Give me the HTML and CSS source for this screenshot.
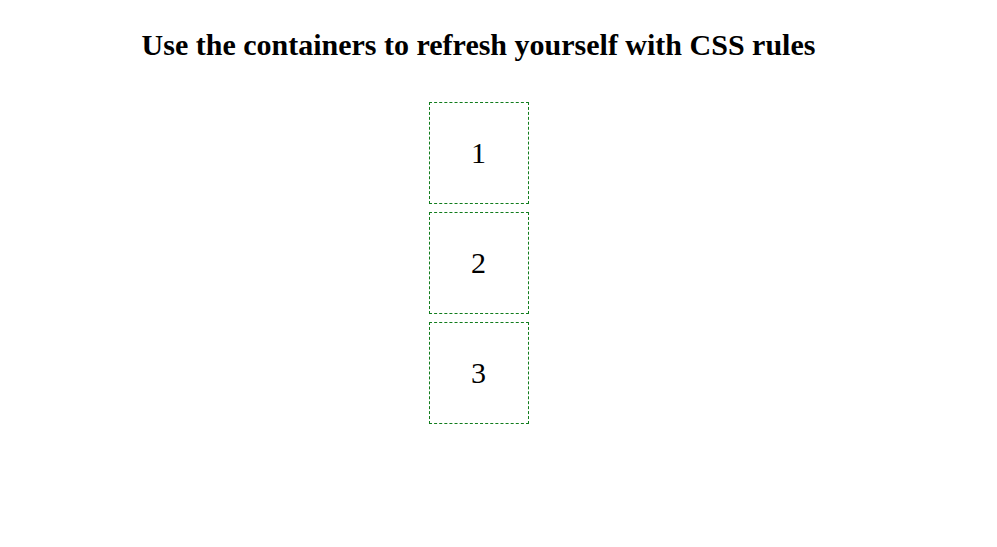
FILE: index.html
```
<!DOCTYPE html>
<html lang="en">
<head>
<meta charset="utf-8">
<title>CSS rules</title>
<link rel="stylesheet" href="styles.css">
</head>
<body>
<main class="page">
<h1 class="title">Use the containers to refresh yourself with CSS rules</h1>
<div class="boxes">
<div class="box">1</div>
<div class="box">2</div>
<div class="box">3</div>
</div>
</main>
</body>
</html>
```

FILE: styles.css
```
* {
  box-sizing: border-box;
}

body {
  margin: 0;
  background: #fff;
  color: #000;
  font-family: "Liberation Serif", serif;
  font-size: 30px;
}

.page {
  padding: 28px 40px 28px 0;
}

.title {
  margin: 0 0 40px;
  font-size: 30px;
  line-height: 34px;
  text-align: center;
}

.boxes {
  display: flex;
  flex-direction: column;
  align-items: center;
  gap: 8px;
}

.box {
  display: flex;
  align-items: center;
  justify-content: center;
  width: 100px;
  height: 102px;
  border: 1px dashed #107c1c;
}
```
